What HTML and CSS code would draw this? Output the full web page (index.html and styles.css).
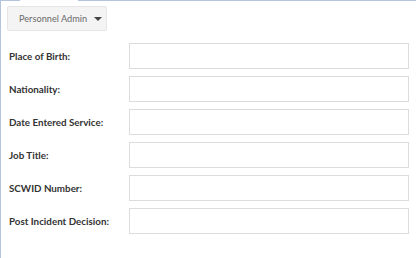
FILE: index.html
```html
<!DOCTYPE html>
<html lang="en">
<head>
    <meta charset="UTF-8">
    <title>Personnel Admin</title>
    <link rel="stylesheet" href="styles.css">
</head>
<body>
<div class="panel">
    <div class="panel-top">
        <span class="edge edge-short"></span>
        <span class="edge-gap"></span>
        <span class="edge edge-long"></span>
    </div>
    <div class="panel-body">
        <button class="menu-btn" type="button">Personnel Admin <span class="caret"></span></button>

        <form class="details">
            <label class="field-label" for="pob">Place of Birth:</label>
            <input class="field-input" type="text" id="pob">

            <label class="field-label" for="nat">Nationality:</label>
            <input class="field-input" type="text" id="nat">

            <label class="field-label" for="des">Date Entered Service:</label>
            <input class="field-input" type="text" id="des">

            <label class="field-label" for="job">Job Title:</label>
            <input class="field-input" type="text" id="job">

            <label class="field-label" for="scwid">SCWID Number:</label>
            <input class="field-input" type="text" id="scwid">

            <label class="field-label" for="pid">Post Incident Decision:</label>
            <input class="field-input" type="text" id="pid">
        </form>
    </div>
</div>
</body>
</html>
```

FILE: styles.css
```css
body {
    margin: 0;
    background: #fff;
    font-family: Lato, "Open Sans", sans-serif;
}
.panel {
    height: 258px;
    border-left: 1px solid #b4c4de;
}
.panel-top {
    display: flex;
    height: 1px;
}
.edge {
    border-top: 1px solid #b4c4de;
}
.edge-short {
    width: 19px;
}
.edge-gap {
    width: 58px;
}
.edge-long {
    flex: 1;
}
.panel-body {
    padding: 5px 0 0 6px;
}
.menu-btn {
    display: flex;
    align-items: center;
    width: 100px;
    height: 25px;
    padding: 0 0 0 11px;
    background: #f4f4f4;
    border: 1px solid #e6e6e6;
    border-radius: 2px;
    color: #6a6a6a;
    font-family: Lato, sans-serif;
    font-size: 9.2px;
    white-space: nowrap;
}
.caret {
    display: inline-block;
    margin-left: 7px;
    width: 0;
    height: 0;
    border-left: 4px solid transparent;
    border-right: 4px solid transparent;
    border-top: 4px solid #444;
}
.details {
    display: grid;
    grid-template-columns: 122px 280px;
    row-gap: 7.5px;
    margin-top: 12px;
    align-items: center;
}
.field-label {
    padding-left: 2px;
    font-size: 9.8px;
    font-weight: bold;
    color: #333;
}
.field-input {
    box-sizing: border-box;
    height: 25.5px;
    margin: 0;
    border: 1px solid #dcdcdc;
    border-radius: 0;
    background: #fff;
}
```
